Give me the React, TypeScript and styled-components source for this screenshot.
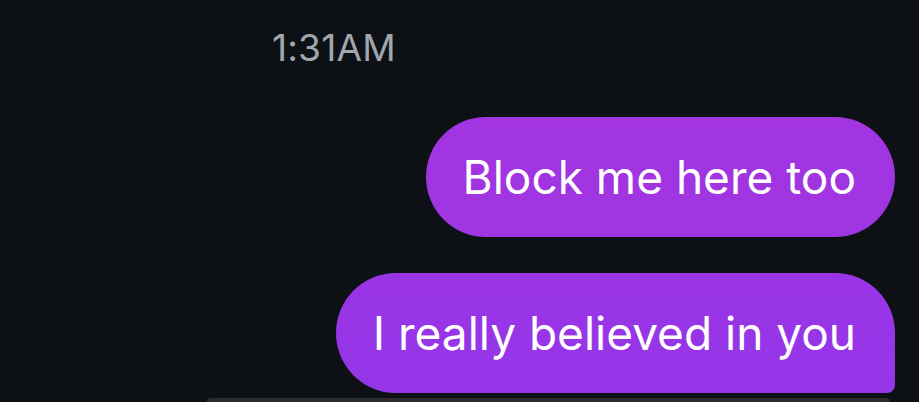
import React from 'react'
import styled, { createGlobalStyle, css } from 'styled-components'

const GlobalStyle = createGlobalStyle`
  html, body {
    margin: 0;
    padding: 0;
    background: #0d1116;
  }
  #root {
    height: 402px;
    overflow: hidden;
  }
`

const Screen = styled.div`
  display: flex;
  flex-direction: column;
  height: 402px;
  background: #0d1116;
  font-family: Inter, 'Noto Sans', sans-serif;
  overflow: hidden;
`

const Timestamp = styled.div`
  margin: 29px 0 0 272px;
  font-size: 37px;
  line-height: 37px;
  color: #a1a6ae;
  letter-spacing: 0.2px;
`

const Thread = styled.div`
  display: flex;
  flex-direction: column;
  align-items: flex-end;
  gap: 36px;
  margin-top: 51px;
  padding-right: 24px;
`

const Bubble = styled.div<{ $tail?: boolean; $tone: string }>`
  display: flex;
  align-items: center;
  height: 120px;
  padding: 0 39px 0 37px;
  border-radius: 60px;
  background: ${p => p.$tone};
  color: #ffffff;
  font-size: 46px;
  letter-spacing: 0;
  white-space: nowrap;
  ${p =>
    p.$tail &&
    css`
      border-bottom-right-radius: 8px;
    `}
`

const NextBubble = styled.div`
  height: 40px;
  margin: 5px 29px 0 207px;
  border-radius: 30px 30px 0 0;
  background: #2a2c30;
`

const messages = [
  { text: 'Block me here too', tone: 'linear-gradient(180deg, #a234e1 0%, #a035e2 100%)' },
  { text: 'I really believed in you', tone: 'linear-gradient(180deg, #9a35e6 0%, #9436e8 100%)', tail: true }
]

const App: React.FC = () => {
  return (
    <>
      <GlobalStyle />
      <Screen>
        <Timestamp>1:31AM</Timestamp>
        <Thread>
          {messages.map(m => (
            <Bubble key={m.text} $tone={m.tone} $tail={m.tail}>
              {m.text}
            </Bubble>
          ))}
        </Thread>
        <NextBubble />
      </Screen>
    </>
  )
}

export default App
